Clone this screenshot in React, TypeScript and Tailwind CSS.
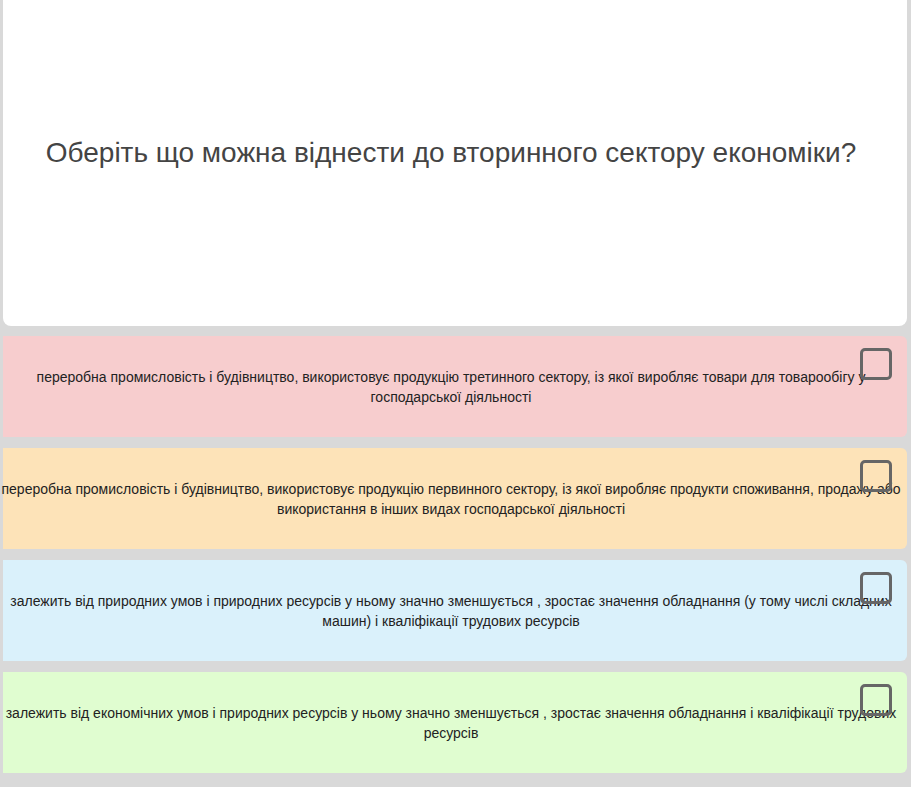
const options = [
  {
    text: 'переробна промисловість і будівництво, використовує продукцію третинного сектору, із якої виробляє товари для товарообігу у господарської діяльності',
    bg: 'bg-[#f7cdce]',
  },
  {
    text: 'переробна промисловість і будівництво, використовує продукцію первинного сектору, із якої виробляє продукти споживання, продажу або використання в інших видах господарської діяльності',
    bg: 'bg-[#fde3b8]',
  },
  {
    text: 'залежить від природних умов і природних ресурсів у ньому значно зменшується , зростає значення обладнання (у тому числі складних машин) і кваліфікації трудових ресурсів',
    bg: 'bg-[#daf1fb]',
  },
  {
    text: 'залежить від економічних умов і природних ресурсів у ньому значно зменшується , зростає значення обладнання і кваліфікації трудових ресурсів',
    bg: 'bg-[#e0fdd0]',
  },
];

export default function App() {
  return (
    <div className="min-h-[787px] bg-[#d9d9d9] pl-[3px] pr-[4px] pb-[15px] font-['Liberation_Sans',Arial,sans-serif]">
      {/* Question */}
      <div className="h-[326px] bg-white rounded-b-lg flex items-center justify-center">
        <h1 className="text-[28px] leading-[32px] text-[#444] text-center -mt-[20px] -translate-x-[4px]">
          Оберіть що можна віднести до вторинного сектору економіки?
        </h1>
      </div>

      {/* Options */}
      <div className="mt-[10px] flex flex-col gap-[11px]">
        {options.map((o, i) => (
          <div
            key={i}
            className={`relative h-[101px] ${o.bg} rounded-r-md flex items-center justify-center`}
          >
            <p className="text-[14px] leading-[20px] text-[#222] text-center mt-[1px] -translate-x-[4px]">
              {o.text}
            </p>
            <div className="absolute top-[12px] right-[15px] w-[32px] h-[32px] border-[3px] border-[#666] rounded-[5px]" />
          </div>
        ))}
      </div>
    </div>
  );
}
